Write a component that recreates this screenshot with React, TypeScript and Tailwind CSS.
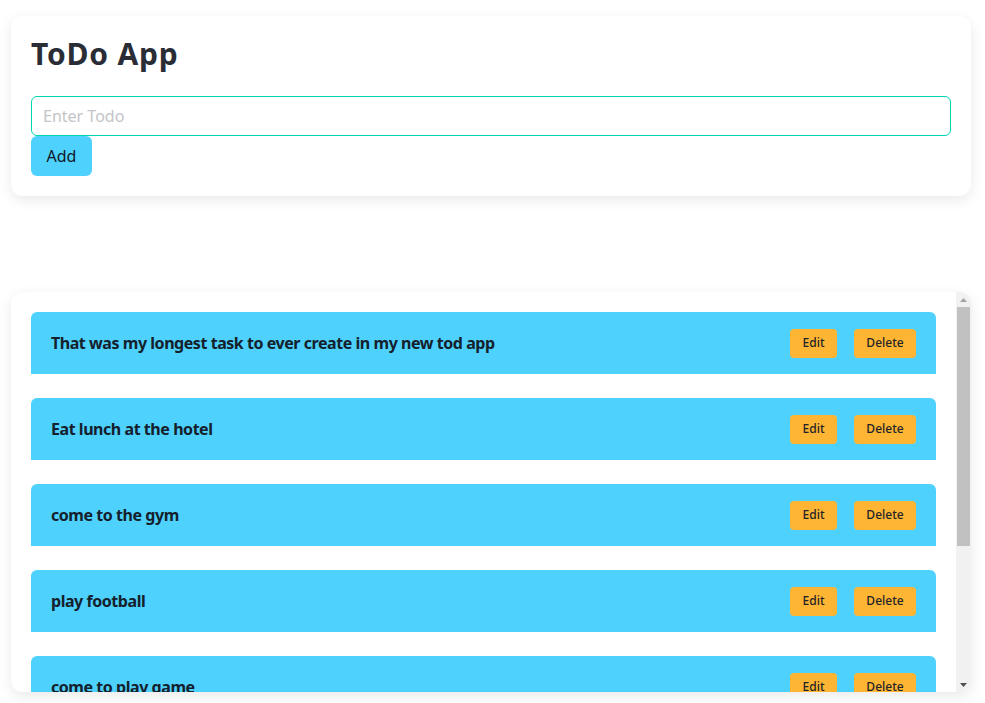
import React from "react";

const todos = [
  "That was my longest task to ever create in my new tod app",
  "Eat lunch at the hotel",
  "come to the gym",
  "play football",
  "come to play game",
  "read a book",
];

export default function App() {
  return (
    <div className="min-h-screen bg-white pt-4 font-['Noto_Sans',sans-serif]">
      <div className="ml-[11px] w-[960px] rounded-xl bg-white p-5 shadow-[0_4px_14px_rgba(0,0,0,0.09)]">
        <h1 className="text-3xl font-bold leading-9 tracking-[0.8px] text-[#2b2d36]">ToDo App</h1>
        <input
          className="mt-6 block h-10 w-full rounded-md border border-[#00d4b1] px-[11px] text-base text-[#1f2937] outline-none placeholder:text-[#c4c4c8]"
          placeholder="Enter Todo"
        />
        <button className="h-10 w-[61px] rounded-md bg-[#4ed1fd] text-base text-[#111827]">Add</button>
      </div>
      <div className="ml-[11px] mt-24 flex h-[400px] w-[960px] overflow-hidden rounded-xl bg-white shadow-[0_4px_14px_rgba(0,0,0,0.09)]">
        <div className="flex min-w-0 flex-1 flex-col gap-6 overflow-hidden p-5">
          {todos.map((t) => (
            <div
              key={t}
              className="flex h-[62px] shrink-0 items-center justify-between rounded-t-md bg-[#4ed1fd] px-5"
            >
              <span className="text-base font-bold tracking-[-0.45px] text-[#14202b]">{t}</span>
              <div className="flex gap-[17px]">
                <button className="h-[29px] w-[47px] rounded bg-[#fdb533] text-xs font-medium text-[#1f2329]">Edit</button>
                <button className="h-[29px] w-[62px] rounded bg-[#fdb533] text-xs font-medium text-[#1f2329]">Delete</button>
              </div>
            </div>
          ))}
        </div>
        <div className="flex w-[15px] shrink-0 flex-col items-center bg-[#f1f1f1]">
          <div className="flex h-[15px] w-full items-center justify-center">
            <svg width="7" height="4" viewBox="0 0 7 4"><path d="M3.5 0L7 4H0z" fill="#a3a3a3" /></svg>
          </div>
          <div className="h-[239px] w-full px-[1px]">
            <div className="h-full w-full bg-[#c1c1c1]" />
          </div>
          <div className="flex-1" />
          <div className="flex h-[15px] w-full items-center justify-center">
            <svg width="7" height="4" viewBox="0 0 7 4"><path d="M0 0H7L3.5 4z" fill="#505050" /></svg>
          </div>
        </div>
      </div>
    </div>
  );
}
